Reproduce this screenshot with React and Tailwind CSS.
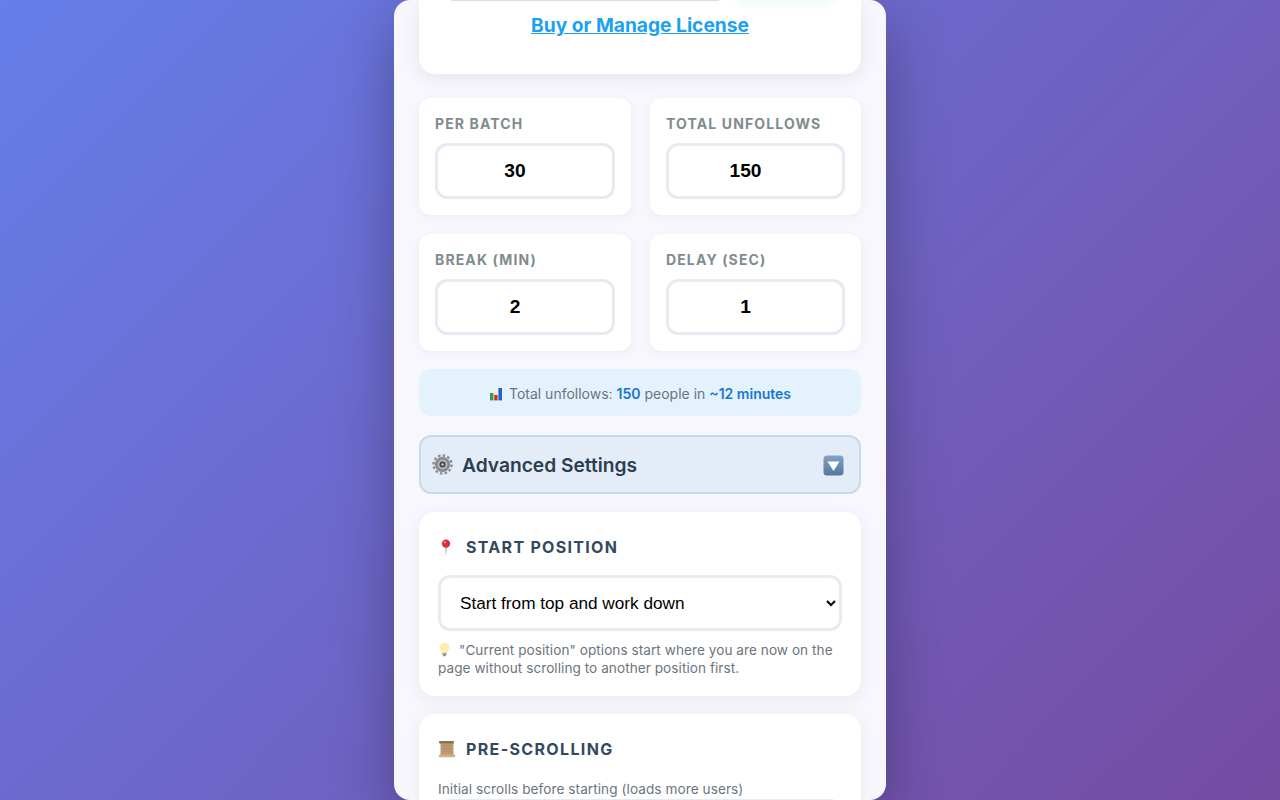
import React from "react";

const font = "font-['Inter','Liberation_Sans',sans-serif]";

function Chart() {
  return (
    <svg width="14" height="14" viewBox="0 0 14 14" className="inline-block">
      <rect x="0" y="0" width="14" height="14" fill="#eef0f2" />
      <rect x="1" y="6" width="3.4" height="7.4" fill="#2f9e44" />
      <rect x="5.2" y="8" width="3.4" height="5.4" fill="#d62b2b" />
      <rect x="9.4" y="1" width="3.6" height="12.4" fill="#1f63c9" />
    </svg>
  );
}
function Gear() {
  return (
    <svg width="21" height="21" viewBox="0 0 21 21">
      <circle cx="10.5" cy="10.5" r="7.6" fill="#85888c" />
      <circle cx="10.5" cy="10.5" r="9" fill="none" stroke="#8b8e92" strokeWidth="2.4" strokeDasharray="2.6 2.1" />
      <circle cx="10.5" cy="10.5" r="5" fill="#b4b6b8" />
      <circle cx="10.5" cy="10.5" r="3" fill="#3f4246" />
      <circle cx="10.5" cy="10.5" r="1.3" fill="#c8cacc" />
    </svg>
  );
}
function DownBox() {
  return (
    <svg width="21" height="21" viewBox="0 0 21 21">
      <defs>
        <linearGradient id="db" x1="0" y1="0" x2="0" y2="1">
          <stop offset="0" stopColor="#83a3c4" />
          <stop offset="1" stopColor="#53779c" />
        </linearGradient>
      </defs>
      <rect x="0.5" y="0.5" width="20" height="20" rx="3.5" fill="url(#db)" />
      <path d="M4.5 6.5H16.5L10.5 16Z" fill="#fff" />
    </svg>
  );
}
function Pin() {
  return (
    <svg width="16" height="16" viewBox="0 0 16 16">
      <path d="M7.4 7H8.6L8.2 15.5H7.8Z" fill="#a08a78" />
      <circle cx="8" cy="4.6" r="4.2" fill="#d9303a" />
      <circle cx="6.8" cy="3.3" r="1.1" fill="#f4a3a8" />
    </svg>
  );
}
function Bulb() {
  return (
    <svg width="13" height="15" viewBox="0 0 13 15">
      <path d="M6.5 0.8C3.4 0.8 1.4 3 1.4 5.5 1.4 7.6 3 8.7 3.8 10.6H9.2C10 8.7 11.6 7.6 11.6 5.5 11.6 3 9.6 0.8 6.5 0.8Z" fill="#fcedb0" />
      <rect x="4.2" y="10.8" width="4.6" height="2.2" rx="0.6" fill="#a4a4a2" />
      <rect x="5.2" y="13" width="2.6" height="1.2" rx="0.5" fill="#7a7a7a" />
    </svg>
  );
}
function Scroll() {
  return (
    <svg width="18" height="18" viewBox="0 0 18 18">
      <rect x="2.5" y="2" width="13" height="14" fill="#bb9a72" />
      <rect x="1" y="1" width="15" height="2.4" rx="1" fill="#8d7355" />
      <rect x="0.8" y="14.6" width="16.4" height="2.6" rx="1.2" fill="#d0ad82" />
      <path d="M5 5.5H13M5 8.5H13M5 11.5H13" stroke="#ab8a62" strokeWidth="0.6" />
    </svg>
  );
}

function Stat({ label, value }) {
  return (
    <div className="h-[117px] rounded-xl bg-white px-4 pt-[15px] shadow-[0_2px_10px_rgba(0,0,0,0.05)]">
      <div className="text-sm leading-[21px] font-[650] tracking-[1.13px] text-[#7f8c8d]">{label}</div>
      <input
        readOnly
        value={value}
        className="mt-[9px] block h-[56px] w-full rounded-xl border-[3px] border-[#e5ebf0] bg-white pr-[20px] text-center font-['Liberation_Sans',sans-serif] text-[19.2px] font-bold text-black outline-none"
      />
    </div>
  );
}

export default function App() {
  return (
    <div className={`flex h-[800px] justify-center overflow-hidden bg-[linear-gradient(135deg,#667eea_0%,#764ba2_100%)] ${font}`}>
      <div className="h-[800px] w-[492px] overflow-hidden rounded-2xl bg-[#f8f7fd] px-[25px] shadow-[0_20px_60px_rgba(0,0,0,0.3)]">
        <div className="relative h-[74px] overflow-hidden rounded-b-2xl bg-white text-center shadow-[0_4px_20px_rgba(0,0,0,0.08)]">
          <div className="absolute top-[-4px] left-[31px] h-[5px] w-[270px] rounded-full bg-[#d5dcec]" />
          <div className="absolute top-[-14px] left-[318px] h-[16px] w-[98px] rounded-full bg-[#e4fbee] blur-[6px]" />
          <a href="#" className="mt-[11px] inline-block text-[19.2px] leading-7 font-bold text-[#1da1f2] underline">
            Buy or Manage License
          </a>
        </div>
        <div className="mt-6 grid grid-cols-[212px_211px] gap-x-[19px] gap-y-[18.5px]">
          <Stat label="PER BATCH" value="30" />
          <Stat label="TOTAL UNFOLLOWS" value="150" />
          <Stat label="BREAK (MIN)" value="2" />
          <Stat label="DELAY (SEC)" value="1" />
        </div>
        <div className="mt-[18.5px] flex h-[47px] items-center justify-center gap-[6px] rounded-xl bg-[#e3f2fd] pt-[3px] text-sm text-[#6c757d]">
          <Chart />
          <span>
            Total unfollows: <b className="font-semibold text-[#1976d2]">150</b> people in{" "}
            <b className="font-semibold text-[#1976d2]">~12 minutes</b>
          </span>
        </div>
        <div className="mt-[18.5px] flex h-[59px] items-center justify-between rounded-xl border-2 border-[#c5dcf0] bg-[#e4ecf7] pt-[2px] pr-[15px] pl-[11px]">
          <div className="flex items-center gap-[9px]">
            <Gear />
            <span className="text-[19.2px] font-semibold text-[#2c3e50]">Advanced Settings</span>
          </div>
          <DownBox />
        </div>
        <div className="mt-[18.5px] h-[183.5px] rounded-2xl bg-white px-[19px] pt-[23px] shadow-[0_4px_20px_rgba(0,0,0,0.06)]">
          <div className="flex h-6 items-center gap-[12px] text-base font-[650] tracking-[1.3px] text-[#34495e]">
            <Pin />
            START POSITION
          </div>
          <select className="mt-[15.5px] block h-[56px] w-full rounded-xl border-[3px] border-[#e5ebf0] bg-white pt-[1px] pl-[15px] font-['Liberation_Sans',sans-serif] text-[17.2px] text-black outline-none">
            <option>Start from top and work down</option>
          </select>
          <p className="mt-[10px] text-[13.6px] leading-[18px] tracking-[0.05px] text-[#6c757d]">
            <span className="mr-2 inline-block align-[-2px]"><Bulb /></span>
            "Current position" options start where you are now on the page without scrolling to another position first.
          </p>
        </div>
        <div className="mt-[18.5px] rounded-2xl bg-white px-[19px] pt-[23px] pb-8 shadow-[0_4px_20px_rgba(0,0,0,0.06)]">
          <div className="flex h-6 items-center gap-[10px] text-base font-[650] tracking-[1.35px] text-[#34495e]">
            <Scroll />
            PRE-SCROLLING
          </div>
          <p className="mt-[19px] text-[13.6px] leading-[18px] tracking-[0.07px] text-[#6c757d]">Initial scrolls before starting (loads more users)</p>
          <div className="mt-[1px] h-[57px] rounded-xl border-[3px] border-[#e5ebf0]" />
        </div>
      </div>
    </div>
  );
}
